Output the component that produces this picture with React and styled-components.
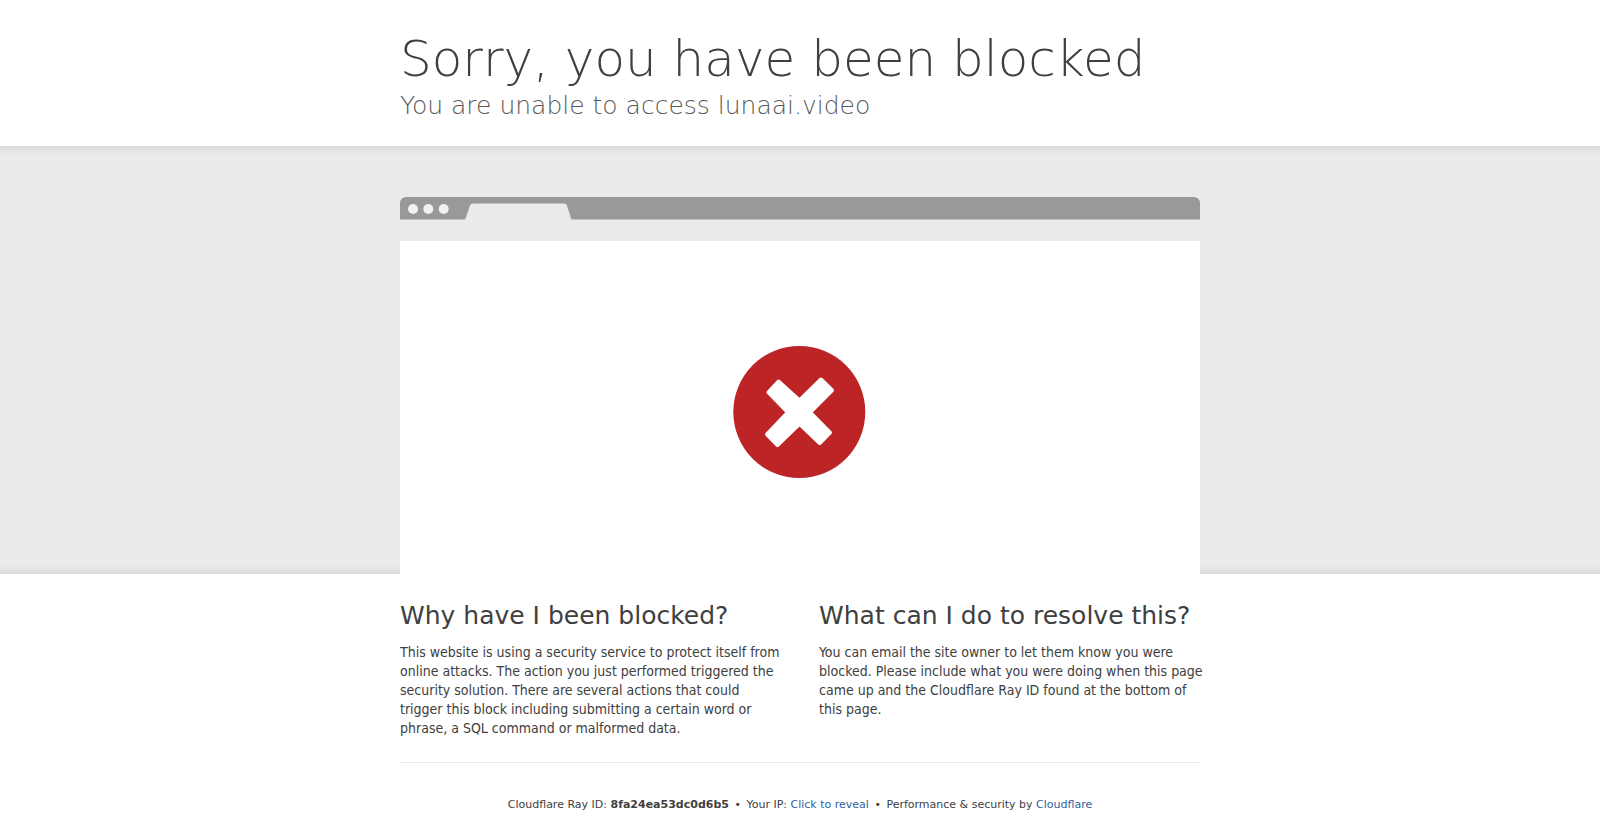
import React from "react";
import styled, { createGlobalStyle } from "styled-components";

const GlobalStyle = createGlobalStyle`
  *, *::before, *::after { box-sizing: border-box; }
  body {
    margin: 0;
    background: #fff;
    color: #404040;
    font-family: "DejaVu Sans", sans-serif;
    font-size: 14px;
    line-height: 19px;
  }
  h1, h2, p { margin: 0; font-weight: 400; }
`;

const Wrapper = styled.div`
  width: 50%;
  min-width: 800px;
  margin: 0 auto;
`;

const Header = styled(Wrapper).attrs({ as: "header" })`
  padding: 28px 0 25px;
`;

const Title = styled.h1`
  && { font-weight: 200; }
  font-size: 50px;
  line-height: 62px;
`;

const Subtitle = styled.h2`
  && { font-weight: 200; }
  font-size: 25px;
  line-height: 31px;
  color: #595959;
`;

const Highlight = styled.section`
  background: #ebebeb;
  padding-top: 51px;
  box-shadow: inset 0 12px 10px -10px #d4d4d4, inset 0 -12px 10px -10px #d4d4d4;
`;

const Browser = styled(Wrapper)`
  background: #fff;
`;

const Chrome = styled.svg`
  display: block;
  width: 100%;
  height: 44px;
  background: #ebebeb;
`;

const Screen = styled.div`
  display: flex;
  justify-content: center;
  padding: 104px 0 95px;
`;

const Columns = styled(Wrapper).attrs({ as: "main" })`
  display: grid;
  grid-template-columns: 1fr 1fr;
  gap: 38px;
  padding: 22px 0 24px;
`;

const ColumnTitle = styled.h2`
  font-size: 25px;
  line-height: 40px;
  margin-bottom: 7px;
`;

const Copy = styled.p`
  margin-right: -4px;
  font-family: "DejaVu Sans Condensed", "DejaVu Sans", sans-serif;
`;

const Footer = styled(Wrapper).attrs({ as: "footer" })`
  border-top: 1px solid #ebebeb;
  padding: 32px 0 16px;
  text-align: center;
  font-size: 11px;
  line-height: 20px;
`;

const Separator = styled.span`
  margin: 0 2px;
`;

const Link = styled.a`
  color: #2f5f9f;
  text-decoration: none;
`;

const RevealButton = styled.button`
  color: #2f5f9f;
  background: none;
  border: 0;
  padding: 0;
  font: inherit;
  cursor: pointer;
`;

export default function App() {
  return (
    <>
      <GlobalStyle />
      <Header>
        <Title>Sorry, you have been blocked</Title>
        <Subtitle>You are unable to access lunaai.video</Subtitle>
      </Header>
      <Highlight>
        <Browser>
          <Chrome aria-hidden="true">
            <rect width="100%" height="40" rx="6" fill="#999" />
            <rect y="22.5" width="100%" height="22" fill="#ebebeb" />
            <path d="M65 23 L70 8.5 Q71 6.5 73 6.5 H164 Q166 6.5 167 8.5 L171.5 23Z" fill="#ebebeb" />
            <circle cx="13" cy="12" r="5" fill="#f2f2f2" />
            <circle cx="28.3" cy="12" r="5" fill="#f2f2f2" />
            <circle cx="43.7" cy="12" r="5" fill="#f2f2f2" />
          </Chrome>
          <Screen>
            <svg width="134" height="134" viewBox="0 0 134 134" role="img" aria-label="Blocked">
              <circle cx="66.3" cy="67" r="66" fill="#bd2426" />
              <path
                d="M45.5 36.5 L66.5 55.5 L88 34.5 L99 45.3 L77 67.3 L97 87.7 L86.7 98 L66.5 78.8 L44.5 100 L34 89.3 L55 67.3 L35.5 47.3Z"
                fill="#fff"
                stroke="#fff"
                strokeWidth="4"
                strokeLinejoin="round"
              />
            </svg>
          </Screen>
        </Browser>
      </Highlight>
      <Columns>
        <section>
          <ColumnTitle>Why have I been blocked?</ColumnTitle>
          <Copy>This website is using a security service to protect itself from online attacks. The action you just performed triggered the security solution. There are several actions that could trigger this block including submitting a certain word or phrase, a SQL command or malformed data.</Copy>
        </section>
        <section>
          <ColumnTitle>What can I do to resolve this?</ColumnTitle>
          <Copy>You can email the site owner to let them know you were blocked. Please include what you were doing when this page came up and the Cloudflare Ray ID found at the bottom of this page.</Copy>
        </section>
      </Columns>
      <Footer>
        Cloudflare Ray ID: <strong>8fa24ea53dc0d6b5</strong>{" "}
        <Separator>•</Separator>{" "}
        Your IP: <RevealButton type="button">Click to reveal</RevealButton>{" "}
        <Separator>•</Separator>{" "}
        Performance &amp; security by <Link href="#cloudflare">Cloudflare</Link>
      </Footer>
    </>
  );
}
